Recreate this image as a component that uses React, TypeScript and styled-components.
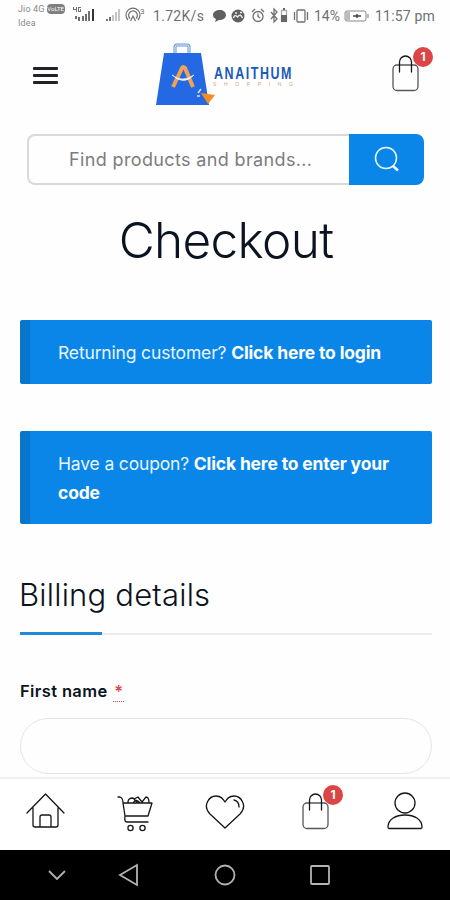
import React from "react";
import styled, { createGlobalStyle } from "styled-components";

const GlobalStyle = createGlobalStyle`
  * { box-sizing: border-box; }
  body { margin: 0; background: #fff; font-family: Inter, sans-serif; color: #0b1220; }
  #root { height: 900px; overflow: hidden; }
`;

const Screen = styled.div`
  width: 450px;
  height: 900px;
  display: flex;
  flex-direction: column;
  background: #fefefe;
  overflow: hidden;
`;

const StatusBar = styled.div`
  display: flex;
  align-items: center;
  height: 32px;
  flex: none;
  padding-left: 18px;
  font-family: Roboto, sans-serif;
  color: #707070;
`;

const Carrier = styled.div`
  width: 54px;
  height: 28px;
  font-size: 9px;
  line-height: 14px;
  letter-spacing: 0.15px;
  color: #8a8a8a;
  white-space: nowrap;
`;

const CarrierRow = styled.div`
  display: flex;
  align-items: center;
  gap: 2px;
  height: 14px;
`;

const VolteTag = styled.span`
  width: 18px;
  height: 10px;
  border-radius: 4px;
  background: #808080;
  color: #fff;
  font-size: 6px;
  line-height: 10px;
  letter-spacing: 0;
  text-align: center;
`;

const StatusIcon = styled.svg<{ $gap?: number }>`
  display: block;
  flex: none;
  margin-left: ${(p) => p.$gap ?? 0}px;
`;

const StatusText = styled.span<{ $width: number; $gap: number; $track?: number }>`
  width: ${(p) => p.$width}px;
  margin-left: ${(p) => p.$gap}px;
  font-size: 14px;
  line-height: 20px;
  letter-spacing: ${(p) => p.$track ?? 0}px;
  white-space: nowrap;
`;

const Header = styled.header`
  display: flex;
  justify-content: space-between;
  height: 102px;
  flex: none;
  padding: 10px 17px 0 33px;
`;

const MenuButton = styled.button`
  display: flex;
  flex-direction: column;
  gap: 4.5px;
  width: 25px;
  height: 17px;
  margin-top: 25px;
  padding: 0;
  border: 0;
  background: none;
`;

const MenuLine = styled.span`
  height: 2.7px;
  border-radius: 1px;
  background: #202226;
`;

const Logo = styled.svg`
  display: block;
  width: 140px;
  height: 66px;
  margin-left: 5px;
  overflow: visible;
`;

const BagSlot = styled.span`
  position: relative;
  display: block;
  width: 44px;
  height: 54px;
`;

const Badge = styled.span<{ $top: number; $right: number }>`
  position: absolute;
  top: ${(p) => p.$top}px;
  right: ${(p) => p.$right}px;
  width: 20px;
  height: 20px;
  border-radius: 50%;
  background: #dc4545;
  color: #fff;
  font-size: 12px;
  font-weight: 700;
  line-height: 20px;
  text-align: center;
`;

const Search = styled.form`
  display: flex;
  flex: none;
  width: 397px;
  height: 51px;
  margin-left: 27px;
`;

const SearchField = styled.div`
  flex: 1;
  border: 2px solid #d9d9db;
  border-right: 0;
  border-radius: 8px 0 0 8px;
  padding-left: 40px;
  font-size: 18px;
  line-height: 47px;
  letter-spacing: 0.36px;
  color: #7c7c7e;
  white-space: nowrap;
`;

const SearchButton = styled.button`
  display: flex;
  align-items: center;
  justify-content: center;
  width: 75px;
  border: 0;
  padding: 0;
  border-radius: 0 8px 8px 0;
  background: #0986e8;
`;

const Content = styled.main`
  display: flex;
  flex-direction: column;
  flex: 1;
  min-height: 0;
  padding: 0 18px 0 20px;
  overflow: hidden;
`;

const Title = styled.h1`
  margin: 23px 0 0;
  height: 64px;
  font-size: 49.5px;
  line-height: 64px;
  font-weight: 320;
  letter-spacing: -0.65px;
  text-align: center;
  white-space: nowrap;
`;

const Notice = styled.div<{ $top: number; $height: number }>`
  flex: none;
  width: 412px;
  height: ${(p) => p.$height}px;
  margin-top: ${(p) => p.$top}px;
  padding: 18px 20px 0 28px;
  border-left: 10px solid #0876cb;
  border-radius: 2px;
  background: #0986e8;
  color: #e8f5ff;
  font-size: 17.5px;
  line-height: 29px;
  letter-spacing: -0.16px;
`;

const NoticeLink = styled.strong`
  color: #fff;
  font-weight: 700;
`;

const SectionTitle = styled.h2`
  flex: none;
  height: 82px;
  margin: 29px 0 0;
  padding-top: 22px;
  border-bottom: 2px solid #ededee;
  font-size: 31px;
  line-height: 40px;
  font-weight: 300;
  letter-spacing: 0.2px;
  text-indent: -1px;
`;

const Accent = styled.div`
  flex: none;
  width: 82px;
  height: 3px;
  margin-top: -3px;
  background: #2288d8;
`;

const Label = styled.label`
  flex: none;
  height: 24px;
  margin-top: 44px;
  font-size: 16.5px;
  line-height: 24px;
  font-weight: 600;
  letter-spacing: 0.38px;
`;

const Required = styled.abbr`
  margin-left: 1px;
  padding: 0 1px;
  color: #e2474b;
  border-bottom: 1px dotted #e2474b;
`;

const Input = styled.div`
  flex: none;
  width: 412px;
  height: 56px;
  margin-top: 14.5px;
  border: 1.5px solid #e5e5e6;
  border-radius: 28px;
`;

const TabBar = styled.nav`
  display: grid;
  grid-template-columns: repeat(5, 90px);
  flex: none;
  height: 73px;
  border-top: 2px solid #f1f1f1;
  background: #fff;
`;

const Tab = styled.a`
  position: relative;
  display: flex;
  justify-content: center;
  padding-top: 12px;
`;

const TabIcon = styled.svg`
  display: block;
  flex: none;
  fill: none;
  stroke: #161616;
  stroke-width: 1.3;
  stroke-linecap: round;
  stroke-linejoin: round;
`;

const SystemBar = styled.div`
  display: grid;
  grid-template-columns: 72px 72px 120px 70px;
  justify-items: center;
  align-items: center;
  flex: none;
  height: 50px;
  padding-left: 21px;
  background: #000;
`;

const SystemIcon = styled.svg`
  display: block;
  fill: none;
  stroke: #b2b2b2;
  stroke-width: 1.8;
`;

const Bag = () => (
  <TabIcon width="28" height="40" viewBox="0 0 28 40">
    <rect x="2" y="12" width="25" height="25.500" rx="4" stroke="#55575a" />
    <path d="M8.500 19V9a6 6 0 0 1 12 0v10" />
  </TabIcon>
);

const HeaderBag = styled.span`
  display: block;
  padding: 11px 0 0 2px;
`;

function SignalIcons() {
  return (
    <StatusIcon width="75" height="22" viewBox="0 0 75 22" fill="#707070">
      <path d="M1 2h1v2h2V2h1v5H4V5H1zM6 2h3v1H7v3h1V4h1v3H6z" />
      <path d="M3 11h2v3H3zM6 12h2v4H6zM10 11h2v5h-2zM13 9h2v7h-2zM16 6h2v10h-2z" />
      <path d="M20 4h2v12h-2z" fill="#333" />
      <path d="M34 14h2v2h-2zM37 12h2v4h-2z" />
      <path d="M40 10h2v6h-2zM43 7h2v9h-2zM46 4h2v12h-2z" fill="#c5c5c5" />
      <g fill="none" stroke="#707070" strokeWidth="1.2">
        <path d="M56 15a7 7 0 1 1 10 0M58 13.5a4.400 4.400 0 1 1 6 0" />
        <path d="m58.500 16 2.500-5 2.500 5" />
      </g>
      <text x="68" y="9" fontSize="8" fontFamily="Roboto">3</text>
    </StatusIcon>
  );
}

function StatusGlyphs() {
  return (
    <StatusIcon width="102" height="20" viewBox="0 0 102 20" $gap={7} fill="none" stroke="#707070" strokeWidth="1.3">
      <path d="M8 4C4 4 1 6 1 9c0 2 1 3 3 4l-1 3 4-2c4 0 7-2 7-5s-3-5-6-5z" fill="#606060" stroke="none" />
      <circle cx="26" cy="10" r="6.500" fill="#606060" stroke="none" />
      <path d="M21.500 12q1-4 4-1 3-4 5 1M23 7h2M28 6.500h2" stroke="#eee" />
      <circle cx="46" cy="10.500" r="5" />
      <path d="M46 7.500v3l2 1.500M40 6l3-3M52 6l-3-3" />
      <path d="m59 6 6 7-3 3V3l3 3-6 7" />
      <rect x="69.500" y="4.500" width="5" height="11" stroke="#aaa" />
      <path d="M69 9h6v7h-6zM71 2h2v2h-2z" fill="#666" stroke="none" />
      <rect x="85" y="4" width="8" height="12" rx="1" />
      <path d="M82.500 6v8M95.500 6v8" />
    </StatusIcon>
  );
}

export default function App() {
  return (
    <Screen>
      <GlobalStyle />
      <StatusBar>
        <Carrier>
          <CarrierRow>Jio 4G <VolteTag>VoLTE</VolteTag></CarrierRow>
          Idea
        </Carrier>
        <SignalIcons />
        <StatusText $width={52} $gap={6} $track={0.3}>1.72K/s</StatusText>
        <StatusGlyphs />
        <StatusText $width={29} $gap={0}>14%</StatusText>
        <StatusIcon width="26" height="14" viewBox="0 0 26 14" $gap={1} fill="none" stroke="#888">
          <rect x="1" y="2" width="21" height="10" rx="2" />
          <path d="M2 3h4v8H2zM23 5h2v4h-2z" fill="#bbb" stroke="none" />
          <path d="M9 7h8M13 5v4" stroke="#444" strokeWidth="1.500" />
        </StatusIcon>
        <StatusText $width={64} $gap={5} $track={0.2}>11:57 pm</StatusText>
      </StatusBar>

      <Header>
        <MenuButton aria-label="Menu"><MenuLine /><MenuLine /><MenuLine /></MenuButton>
        <Logo viewBox="0 0 140 66">
          <path d="M19 11V5q0-2 2-2h10q2 0 2 2v6" fill="none" stroke="#6794de" strokeWidth="3" />
          <path d="M19 11V5q0-2 2-2h10q2 0 2 2v6" fill="none" stroke="#eaf1fc" strokeWidth="1" />
          <path d="M8 11h37l8 52H0z" fill="#2468e3" />
          <path d="m17 45 9-19q1-2 3 0l8 19" fill="none" stroke="#f3a252" strokeWidth="4" />
          <path d="M16 33q10 8 22 0-10 11-22 0z" fill="#e8f2ff" stroke="#e8f2ff" strokeWidth=".7" />
          <path d="m45 51 14 2-7 9z" fill="#f58c25" />
          <path d="m42 51 3-4M41 54h3" stroke="#d5e4fc" strokeWidth="1.500" />
          <text x="58" y="37" fontFamily="Liberation Sans" fontSize="16" fontWeight="700" fill="#1a5ab8" textLength="79" lengthAdjust="spacingAndGlyphs" letterSpacing="2">ANAITHUM</text>
          <text x="57" y="44" fontFamily="Liberation Sans" fontSize="5" fill="#d4a67a" textLength="80">SHOPPING</text>
        </Logo>
        <BagSlot>
          <HeaderBag><Bag /></HeaderBag>
          <Badge $top={5} $right={0}>1</Badge>
        </BagSlot>
      </Header>

      <Search>
        <SearchField>Find products and brands...</SearchField>
        <SearchButton type="button" aria-label="Search">
          <svg width="28" height="28" viewBox="0 0 28 28" fill="none" stroke="#eef8ff">
            <circle cx="13" cy="12" r="10.500" strokeWidth="1.500" />
            <path d="m20 20 5 4.500" strokeWidth="2.500" />
          </svg>
        </SearchButton>
      </Search>

      <Content>
        <Title>Checkout</Title>
        <Notice $top={48} $height={64}>Returning customer? <NoticeLink>Click here to login</NoticeLink></Notice>
        <Notice $top={47} $height={93}>Have a coupon? <NoticeLink>Click here to enter your code</NoticeLink></Notice>
        <SectionTitle>Billing details</SectionTitle>
        <Accent />
        <Label>First name <Required>*</Required></Label>
        <Input />
      </Content>

      <TabBar>
        <Tab>
          <TabIcon width="40" height="40" viewBox="0 0 40 40">
            <path d="M2 22 20.500 3 39 22M8 17v17q0 2 2 2h21q2 0 2-2V17M15 36V26q0-2 2-2h7q2 0 2 2v10" />
          </TabIcon>
        </Tab>
        <Tab>
          <TabIcon width="40" height="42" viewBox="0 0 40 42">
            <path d="M3 6h2q3 1 3 6l2 13h23l4-13H8M10 25q-1 6 2 6h21M13 11q0-4 5-4l4 4M19 8l4-2 4 5 4-5q3 0 3 6M18 12q3-5 7 0" />
            <circle cx="15.500" cy="37" r="2.600" /><circle cx="27.500" cy="37" r="2.600" />
          </TabIcon>
        </Tab>
        <Tab>
          <TabIcon width="42" height="40" viewBox="0 0 42 40">
            <path d="M21 37 6 23C-2 15 5 5 12 5c5 0 7 3 9 6 2-3 4-6 9-6 7 0 14 10 6 18zM30 9q5 1 5 7" />
          </TabIcon>
        </Tab>
        <Tab>
          <Bag />
          <Badge $top={6} $right={17}>1</Badge>
        </Tab>
        <Tab>
          <TabIcon width="38" height="40" viewBox="0 0 38 40">
            <circle cx="19" cy="12" r="10" /><path d="M2 36c0-8 8-12 17-12s17 4 17 12q0 1.500-1 1.500H3q-1 0-1-1.500z" />
          </TabIcon>
        </Tab>
      </TabBar>

      <SystemBar>
        <SystemIcon width="24" height="24" viewBox="0 0 24 24"><path d="m4 8 8 8 8-8" /></SystemIcon>
        <SystemIcon width="24" height="24" viewBox="0 0 24 24"><path d="M20 2v20L3 12z" /></SystemIcon>
        <SystemIcon width="24" height="24" viewBox="0 0 24 24"><circle cx="12" cy="12" r="9.500" /></SystemIcon>
        <SystemIcon width="24" height="24" viewBox="0 0 24 24"><rect x="3" y="3" width="18" height="18" rx="1" /></SystemIcon>
      </SystemBar>
    </Screen>
  );
}
